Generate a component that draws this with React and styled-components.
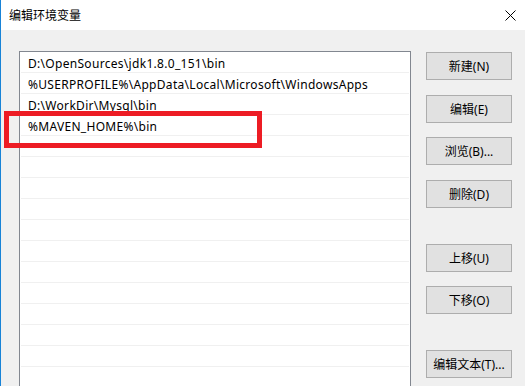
import React from 'react';
import styled, { createGlobalStyle } from 'styled-components';

const GlobalStyle = createGlobalStyle`
    html, body {
        margin: 0;
        padding: 0;
        background: #f0f0f0;
        overflow: hidden;
    }
`

const Window = styled.div`
    width: 525px;
    height: 386px;
    box-sizing: border-box;
    border-left: 1px solid #1883d7;
    background: #f0f0f0;
    font-family: "Noto Sans", "Noto Sans CJK SC", sans-serif;
    font-size: 12px;
    color: #000;
    overflow: hidden;
    display: flex;
    flex-direction: column;
`

const TitleBar = styled.div`
    height: 30px;
    flex-shrink: 0;
    background: #fff;
    display: flex;
    align-items: center;
    justify-content: space-between;
    padding: 0 9px 0 8px;
`

const Title = styled.div`
    font-family: "Noto Sans CJK SC", sans-serif;
    font-size: 12px;
    line-height: 14px;
`

const Body = styled.div`
    flex: 1;
    display: flex;
    align-items: flex-start;
    padding: 21px 0 0 18px;
    gap: 15px;
`

const ListBox = styled.div`
    position: relative;
    width: 392px;
    height: 400px;
    box-sizing: border-box;
    border: 1px solid #828790;
    background: #fff;
    flex-shrink: 0;
`

const Row = styled.div`
    height: 20px;
    margin: 0 1px;
    border-bottom: 1px solid #f0f0f0;
    padding: 2px 0 0 7px;
    box-sizing: content-box;
    height: 18px;
    display: flex;
    align-items: center;
    white-space: nowrap;
    overflow: hidden;
    letter-spacing: 0.3px;
`

const Highlight = styled.div`
    position: absolute;
    left: -16px;
    top: 59px;
    width: 258px;
    height: 37px;
    box-sizing: border-box;
    border: 5px solid #ed1c24;
    pointer-events: none;
`

const ButtonColumn = styled.div`
    display: flex;
    flex-direction: column;
    padding-top: 1px;
`

const Button = styled.div`
    width: 86px;
    height: 28px;
    box-sizing: border-box;
    margin-top: ${props => props.gap || 0}px;
    border: 1px solid #adadad;
    background: #e1e1e1;
    display: flex;
    align-items: center;
    justify-content: center;
    padding-bottom: 1px;
    font-family: "Noto Sans", "Noto Sans CJK SC", sans-serif;
    font-size: 12px;
    white-space: nowrap;
`

const paths = [
    'D:\\OpenSources\\jdk1.8.0_151\\bin',
    '%USERPROFILE%\\AppData\\Local\\Microsoft\\WindowsApps',
    'D:\\WorkDir\\Mysql\\bin',
    '%MAVEN_HOME%\\bin',
];

const buttons = [
    { label: '新建(N)', gap: 0 },
    { label: '编辑(E)', gap: 15 },
    { label: '浏览(B)...', gap: 14 },
    { label: '删除(D)', gap: 15 },
    { label: '上移(U)', gap: 36 },
    { label: '下移(O)', gap: 14 },
    { label: '编辑文本(T)...', gap: 36 },
];

const CloseIcon = () => (
    <svg width="11" height="11" viewBox="0 0 11 11">
        <path d="M0.5 0.5 L10.5 10.5 M10.5 0.5 L0.5 10.5" stroke="#000" strokeWidth="1" />
    </svg>
);

export default function App() {
    const rows = [];
    for (let i = 0; i < 17; i++) rows.push(paths[i] || '');
    return (
        <Window>
            <GlobalStyle />
            <TitleBar>
                <Title>编辑环境变量</Title>
                <CloseIcon />
            </TitleBar>
            <Body>
                <ListBox>
                    {rows.map((p, i) => <Row key={i}>{p}</Row>)}
                    <Highlight />
                </ListBox>
                <ButtonColumn>
                    {buttons.map(b => <Button key={b.label} gap={b.gap}>{b.label}</Button>)}
                </ButtonColumn>
            </Body>
        </Window>
    );
}
